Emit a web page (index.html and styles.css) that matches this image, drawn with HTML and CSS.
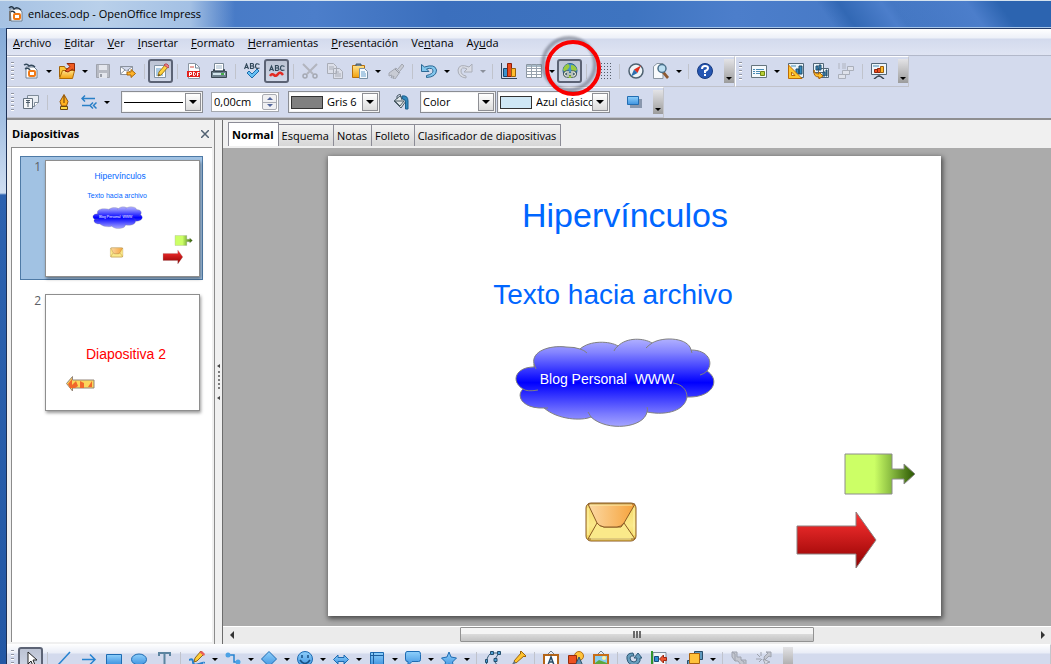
FILE: index.html
```html
<!DOCTYPE html>
<html lang="es">
<head>
<meta charset="utf-8">
<title>enlaces.odp - OpenOffice Impress</title>
<link rel="stylesheet" href="styles.css">
</head>
<body>
<svg class="defs" width="0" height="0" aria-hidden="true">
  <defs>
    <linearGradient id="blue" x1="0" y1="0" x2="0" y2="1"><stop offset="0" stop-color="#8fd0fb"/><stop offset="1" stop-color="#3f93e0"/></linearGradient>
    <linearGradient id="gold" x1="0" y1="0" x2="0" y2="1"><stop offset="0" stop-color="#ffe28a"/><stop offset="1" stop-color="#f2a10c"/></linearGradient>
    <linearGradient id="cloudFill" x1="0" y1="0" x2="0" y2="1"><stop offset="0" stop-color="#b0b0ff"/><stop offset=".15" stop-color="#8585ff"/><stop offset=".5" stop-color="#0000ff"/><stop offset=".85" stop-color="#7878ff"/><stop offset="1" stop-color="#a5a5ff"/></linearGradient>
    <linearGradient id="redFill" x1="0" y1="0" x2="0" y2="1"><stop offset="0" stop-color="#ff3434"/><stop offset="1" stop-color="#900000"/></linearGradient>
    <linearGradient id="greenFill"><stop offset="0" stop-color="#ccff66"/><stop offset=".42" stop-color="#ccff66"/><stop offset=".68" stop-color="#84b63e"/><stop offset="1" stop-color="#295400"/></linearGradient>
    <linearGradient id="flap"><stop offset="0" stop-color="#fbd9a4"/><stop offset="1" stop-color="#f6a23a"/></linearGradient>
    <linearGradient id="mail" x1="0" y1="0" x2="0" y2="1"><stop offset="0" stop-color="#f3d766"/><stop offset=".6" stop-color="#fbe98a"/><stop offset="1" stop-color="#f1d250"/></linearGradient>
    <g id="shapes">
      <g stroke="#808080" fill="url(#cloudFill)">
        <path d="M206 208C203 195 222 189 238 191Q247 191 252 193C262 184 282 185 290 190C299 181 316 182 324 187C336 180 361 182 363 194C380 194 386 206 379 215C393 224 385 242 359 241C357 254 340 260 319 256C316 272 279 276 263 261C254 265 230 264 216 252C196 253 187 241 195 233C182 225 188 211 206 211Z"/>
        <path fill="none" d="M252 193Q256 194 259 197M290 190Q287 192 286 195M324 187Q321 189 318 192M363 194L364 197M379 215Q376 218 372 219M206 208L208 213M195 233Q199 236 210 234M216 252L220 252M263 261L260 256M319 256Q320 253 319 251M359 241C359 233 353 228 345 227"/>
      </g>
      <g stroke="#8b5a24" stroke-linejoin="round">
        <rect x="258" y="347" width="50" height="38" rx="5" fill="url(#mail)"/>
        <path fill="#fae98a" d="M260 383L269 367Q273 371 276 371H293L296 367L307 383Z"/>
        <path fill="url(#flap)" d="M260 348H307L296 367Q293 371 289 371H276Q271 370 269 367Z"/>
        <path fill="none" stroke="#fff4a7" d="M262 349H304M260 352V379M306 352V379M263 383H303"/>
      </g>
      <path fill="url(#greenFill)" stroke="#8c8c8c" d="M517 298H564V313H576V308L587 318L576 328V323H564V338H517Z"/>
      <path fill="url(#redFill)" stroke="#8c8080" d="M469 370H528V356L548 384L528 412V398H469Z"/>
    </g>
  </defs>
</svg>

<header class="titlebar">
  <svg class="icon" viewBox="0 0 16 16"><path d="M2 3h10l2 3v9H3z" fill="#fff" stroke="#6d7c8d"/><path d="M1 2q3-3 5 1q3-3 7 1M2 6q3-2 5 1" fill="none" stroke="#263747" stroke-width="1.500"/><rect x="6" y="8" width="6" height="5" rx="1" fill="#fff" stroke="#f07814" stroke-width="2"/><path d="M2 5v10" stroke="#777" stroke-width="2"/></svg>
  <h1 class="window-title">enlaces.odp - OpenOffice Impress</h1>
</header>

<div class="window">
<nav class="menubar" aria-label="Menú">
  <button><u>A</u>rchivo</button><button><u>E</u>ditar</button><button><u>V</u>er</button><button><u>I</u>nsertar</button><button><u>F</u>ormato</button><button><u>H</u>erramientas</button><button><u>P</u>resentación</button><button>Ve<u>n</u>tana</button><button>Ay<u>u</u>da</button>
</nav>

<div class="bars">
<div class="toolbar" role="toolbar" aria-label="Estándar">
  <span class="grip"></span>
  <button class="tool" aria-label="Nuevo"><svg class="icon" viewBox="0 0 16 16"><path d="M3 4h8l3 3v8H3z" fill="#fff" stroke="#708193"/><path d="M1 2q3-2 5 1q3-2 6 1M2 6q3-2 5 1" fill="none" stroke="#33485b" stroke-width="1.500"/><rect x="6" y="8" width="6" height="5" rx="1" fill="#fff" stroke="#f07814" stroke-width="2"/></svg></button>
  <button class="drop" aria-label="Más opciones"></button>
  <button class="tool" aria-label="Abrir"><svg class="icon" viewBox="0 0 16 16"><path d="M.5 14V3.500h5l1 2h7v2" fill="#fbc83c" stroke="#a26208"/><path d="M.5 15.500l3-8h12l-2 8z" fill="url(#gold)" stroke="#b06b05"/><path d="M6 8l5-4.500L8 .5h7.500V8l-2-2L9 9z" fill="#ef5b21" stroke="#8f2808"/></svg></button>
  <button class="drop" aria-label="Más opciones"></button>
  <button class="tool" aria-label="Guardar" disabled><svg class="icon" viewBox="0 0 16 16"><path d="M1.500 1.500h13v13h-13z" fill="#b7bac3" stroke="#9fa3ad"/><path d="M4 2h8v5H4zM4 10h8v5H4z" fill="#e4e6ed"/><path d="M5 11h2v3H5z" fill="#999da7"/></svg></button>
  <button class="tool" aria-label="Enviar por correo"><svg class="icon" viewBox="0 0 16 16"><path d="M.5 3.500h12v8H.5zL6.500 8l6-4.500M.5 11L5 7M12 11L8 7" fill="#fff" stroke="#8b929e"/><path d="M7 9h4V6.500L15.500 10.500L11 14.500V12H7z" fill="#ffb329" stroke="#ab6607"/></svg></button>
  <span class="sep"></span>
  <button class="tool pressed" aria-label="Editar archivo"><svg class="icon" viewBox="0 0 16 16"><path d="M1.500 2.500h11v12h-11z" fill="#f7fafd" stroke="#8293a4"/><path d="M3 6h5M3 8h4M3 10h3M3 12h7" stroke="#5d9ac8"/><path d="M5 13l1-4l6-7l3 2l-7 8z" fill="#ffd33e" stroke="#9f7817"/><path d="M11 2l1-1h2l2 2v1l-1 1z" fill="#ef7e88" stroke="#b44e59"/><path d="M5 13l1-2l1 1z" fill="#222"/></svg></button>
  <span class="sep"></span>
  <button class="tool" aria-label="Exportar como PDF"><svg class="icon" viewBox="0 0 16 16"><path d="M2.500.5h7l4 4v11h-11z" fill="#fff" stroke="#8c97a3"/><path d="M9.500 1v4h4" stroke="#718798" fill="none"/><path d="M4 4h4" stroke="#d34b3e"/><path d="M1 8h13v6H1z" fill="#e3201b"/><path d="M3.500 13V9.500h2v2h-2M7.500 9v3.500h1l1-1v-1l-1-1zM11.500 13V9.500h2M11.500 11.500h1" stroke="#fff" fill="none"/></svg></button>
  <button class="tool" aria-label="Imprimir"><svg class="icon" viewBox="0 0 16 16"><path d="M3.500.5h9v7h-9z" fill="#fff" stroke="#7b8a98"/><path d="M5 3h6M5 5h6" stroke="#9eb6ca"/><path d="M.5 8.500h2v-2h1v2h9v-2h1v2h2v6H.5z" fill="#718491" stroke="#394753"/><path d="M2 10h12v2H2z" fill="#d1e4ec"/><path d="M10 11h3" stroke="#45af4a" stroke-width="2"/></svg></button>
  <span class="sep"></span>
  <button class="tool" aria-label="Ortografía y gramática"><svg class="icon" viewBox="0 0 16 16"><path d="M.5 6L2.500 1L4.500 6M1 4.500h3M6.500 5.500V.5h2q2 1 0 2.500q3 1 0 2.500zM7 3h2M15.500 1.500q-4-2-4 1.500t4 2" fill="none" stroke="#32485a" stroke-width="1.200"/><path d="M3 10l2-2l3 3l5-5l2 2l-7 7z" fill="#65c0f4" stroke="#1e6cab"/></svg></button>
  <button class="tool pressed" aria-label="Revisión automática"><svg class="icon" viewBox="0 0 16 16"><path d="M.5 8L2.500 3L4.500 8M1 6.500h3M6.500 7.500V2.500h2q2 1 0 2.500q3 1 0 2.500zM7 5h2M15.500 3.500q-4-2-4 1.500t4 2" fill="none" stroke="#32485a" stroke-width="1.200"/><path d="M1 13q2-3 4-1t4-1t5 1" fill="none" stroke="#e22b23" stroke-width="2.500"/></svg></button>
  <span class="sep"></span>
  <button class="tool" aria-label="Cortar" disabled><svg class="icon" viewBox="0 0 16 16"><path d="M1 1l10 10M15 1L5 11" stroke="#b2b5be" stroke-width="2"/><circle cx="3" cy="13" r="2" fill="none" stroke="#a5a9b3" stroke-width="1.500"/><circle cx="13" cy="13" r="2" fill="none" stroke="#a5a9b3" stroke-width="1.500"/></svg></button>
  <button class="tool" aria-label="Copiar" disabled><svg class="icon" viewBox="0 0 16 16"><path d="M.5.5h6l3 3v7h-9zM6.500 5.500h6l3 3v7h-9z" fill="#dcdfe9" stroke="#a9adb7"/><path d="M2 4h5M2 6h4M8 9h4M8 11h6M8 13h6" stroke="#a9adb7"/></svg></button>
  <button class="tool" aria-label="Pegar"><svg class="icon" viewBox="0 0 16 16"><path d="M.5 2.500h12v12H.5z" fill="url(#gold)" stroke="#b66f0c"/><path d="M4 3V1h5v2" fill="#718594" stroke="#485b69"/><path d="M7.500 5.500h5l3 3v7h-8z" fill="#f6fafe" stroke="#7890a5"/><path d="M9 9h4M9 11h5M9 13h5" stroke="#679fcc"/></svg></button>
  <button class="drop" aria-label="Más opciones"></button>
  <button class="tool" aria-label="Pincel de formato" disabled><svg class="icon" viewBox="0 0 16 16"><path d="M10 6l4-5l2 2l-4 5M1 10l7-5l4 4l-5 7H5l1-3l-3 2l1-3l-3 1z" fill="#c8cbd4" stroke="#a3a7b1"/><path d="M7 6l4 4" stroke="#8f949f"/></svg></button>
  <span class="sep"></span>
  <button class="tool" aria-label="Deshacer"><svg class="icon" viewBox="0 0 16 16"><path d="M.5 1.500v7h7.500L5.500 6Q12 4 12 8Q12 11 5.500 12.500v2Q15.500 14 15.500 7Q14 .5 3.500 4z" fill="#82c6ed" stroke="#2c6894"/></svg></button>
  <button class="drop" aria-label="Más opciones"></button>
  <button class="tool" aria-label="Restaurar" disabled><svg class="icon" viewBox="0 0 16 16"><path d="M15 1v8H7l3-3Q4 3 4 8q0 4 5 5v2Q1 14 1 7q1-7 11-3z" fill="#d9dce5" stroke="#aaaeb8"/></svg></button>
  <button class="drop off" aria-label="Más opciones" disabled></button>
  <span class="sep"></span>
  <button class="tool" aria-label="Gráfico"><svg class="icon" viewBox="0 0 16 16"><path d="M.5 0v15.500H16" fill="none" stroke="#314358"/><path d="M2.500 5.500h4v8h-4z" fill="#3c91cb" stroke="#124670"/><path d="M6.500 .5h4v13h-4z" fill="#ea4c1e" stroke="#8e1e08"/><path d="M10.500 5.500h4v8h-4z" fill="#ffbd2e" stroke="#99610a"/></svg></button>
  <button class="tool" aria-label="Tabla"><svg class="icon" viewBox="0 0 16 16"><path d="M.5 1.500h15v13H.5z" fill="#fff" stroke="#8b96a2"/><path d="M1 2h14v2H1z" fill="#a7bac7"/><path d="M.5 5.500h15M.5 8.500h15M.5 11.500h15M5.500 1v13M10.500 1v13" stroke="#98a2ad"/></svg></button>
  <button class="drop" aria-label="Más opciones"></button>
  <span class="callout">
    <button class="tool pressed" aria-label="Hiperenlace"><svg class="icon" viewBox="0 0 16 16"><circle cx="8" cy="7.500" r="7" fill="#4895c6" stroke="#27638b"/><path d="M1 7Q2 2 6 1q3 2 0 5l-3 3zM9 2q5 0 6 5l-4 2l-2-3zM4 12h8l-2 3H6z" fill="#9ccb3f"/><path d="M7 9H4q-3 2 0 4h3M9 9h3q3 2 0 4H9M5 11h6" fill="none" stroke="#3f4d52" stroke-width="3"/><path d="M7 9H4q-3 2 0 4h3M9 9h3q3 2 0 4H9M5 11h6" fill="none" stroke="#e1e8dc" stroke-width="1.300"/></svg></button>
    <svg class="ring" viewBox="0 0 64 64" aria-hidden="true"><circle class="ring-shadow" cx="30" cy="30" r="26"/><circle cx="34" cy="34" r="26" fill="none" stroke="#fa0000" stroke-width="4"/></svg>
  </span>
  <span class="sep"></span>
  <button class="tool" aria-label="Mostrar cuadrícula"><svg class="icon" viewBox="0 0 16 16"><path d="M3.500 0v16M6.500 0v16M9.500 0v16M12.500 0v16M15.500 0v16" stroke="#555d6b" stroke-dasharray="1 2"/></svg></button>
  <span class="sep"></span>
  <button class="tool" aria-label="Navegador"><svg class="icon" viewBox="0 0 16 16"><circle cx="8" cy="8" r="7" fill="#eef4f7" stroke="#4e6170" stroke-width="1.500"/><path d="M13 2.500L9.500 10L6 6.500z" fill="#e32c1b"/><path d="M3 13.500L6 6.500L9.500 10z" fill="#2d6fae"/></svg></button>
  <button class="tool" aria-label="Zoom"><svg class="icon" viewBox="0 0 16 16"><path d="M.5 3.500L4 .5h6v15H.5z" fill="#f8fafc" stroke="#8995a1"/><path d="M11 8l5 6l-2 2l-5-6z" fill="#8e5930"/><circle cx="9" cy="5.500" r="4" fill="#bcdff2" stroke="#4a6f89" stroke-width="1.500"/></svg></button>
  <button class="drop" aria-label="Más opciones"></button>
  <span class="sep"></span>
  <button class="tool" aria-label="Ayuda"><svg class="icon" viewBox="0 0 16 16"><circle cx="8" cy="8" r="7.500" fill="#2556b2" stroke="#173b81"/><path d="M5 6q0-3 3-3t3 2q0 2-3 3v2M8 11v2" fill="none" stroke="#fff" stroke-width="2"/></svg></button>
  <button class="more" aria-label="Más botones"></button>
</div>
<div class="toolbar" role="toolbar" aria-label="Presentación">
  <span class="grip"></span>
  <button class="tool" aria-label="Diapositiva"><svg class="icon" viewBox="0 0 16 16"><path d="M.5 2.500h15v12H.5z" fill="#f4f9fc" stroke="#65747d"/><path d="M2 6.500h2M2 8.500h2M2 10.500h2M5 6.500h8M5 8.500h4M5 10.500h4" stroke="#498bb5"/><path d="M9.500 8.500h4v4h-4z" fill="#b6cd35" stroke="#718611"/></svg></button>
  <button class="drop" aria-label="Más opciones"></button>
  <span class="gap"></span>
  <button class="tool" aria-label="Estilo de diapositiva"><svg class="icon" viewBox="0 0 16 16"><path d="M.5.5h15v14H.5z" fill="#eaf4fa" stroke="#536777"/><path d="M3 3h5" stroke="#498bb5"/><path d="M8 6h3v5H8zM11 3h3v8h-3z" fill="#328bc1" stroke="#214a67"/><path d="M.5 2v13.500H14z" fill="#ffc62d" stroke="#bd6c06"/><path d="M3.500 9l3.500 3.500H3.500z" fill="#f5f1d8" stroke="#bd6c06"/></svg></button>
  <button class="tool" aria-label="Duplicar diapositiva"><svg class="icon" viewBox="0 0 16 16"><path d="M.5.5h10v9H.5zM5.500 5.500h10v9h-10z" fill="#eaf4fa" stroke="#536777"/><path d="M3 3h2v4H3zM6 2h2v5H6zM10 9h2v4h-2zM13 7h1v6h-1z" fill="#3f98cf" stroke="#214a67"/><path d="M1 7q0 4 5 4V9l4 4l-4 3v-2q-6 0-5-7z" fill="#ffc02c" stroke="#ae6307"/></svg></button>
  <button class="tool" aria-label="Expandir diapositiva" disabled><svg class="icon" viewBox="0 0 16 16"><path d="M0 1h2M0 3h2M0 5h2M4 1h4M4 3h4M4 5h4" stroke="#b0b4bf"/><path d="M9.500 3.500h6v4h-6zM4.500 7.500h7v4h-7zM.5 11.500h7v4h-7z" fill="#dfe2eb" stroke="#aaafba"/></svg></button>
  <span class="sep"></span>
  <button class="tool" aria-label="Presentación en pantalla"><svg class="icon" viewBox="0 0 16 16"><path d="M.5.5h15v11H.5z" fill="#edf5fa" stroke="#536777"/><path d="M2 3h6" stroke="#498bb5"/><path d="M3.500 6.500h3v3h-3z" fill="#ec4f22" stroke="#8e250d"/><path d="M6.500 5.500h3v4h-3z" fill="#ec4f22" stroke="#8e250d"/><path d="M9.500 3.500h3v6h-3z" fill="#ffb92b" stroke="#9c5e0c"/><path d="M8 12v2M7 13l-4 3M9 13l4 3" stroke="#394550" stroke-width="1.500"/></svg></button>
  <button class="more" aria-label="Más botones"></button>
</div>
</div>

<div class="bars">
<div class="toolbar" role="toolbar" aria-label="Línea y relleno">
  <span class="grip"></span>
  <button class="tool" aria-label="Estilos y formato"><svg class="icon" viewBox="0 0 16 16"><path d="M4.500 1.500h11v7l-4 4h-7z" fill="#e9edf3" stroke="#7e8b99"/><path d="M15.500 8.500h-4v4" fill="#fff" stroke="#7e8b99"/><path d="M.5 4.500h9v10h-9z" fill="#f5f7fa" stroke="#65727f"/><path d="M5 6v7M3 8.500h4M3 6.500h4" stroke="#4d5d6b"/></svg></button>
  <span class="sep"></span>
  <button class="tool" aria-label="Línea"><svg class="icon" viewBox="0 0 16 16"><path d="M8 .5l4 7L10.500 12h-5L4 7.500z" fill="#ffb21f" stroke="#96550a"/><path d="M8 2v7" stroke="#65380b"/><path d="M4.500 12.500h7v3h-7z" fill="#ffda47" stroke="#684810"/></svg></button>
  <button class="tool" aria-label="Estilo de flecha"><svg class="icon" viewBox="0 0 16 16"><path d="M4 1.500L1 4.500l3 3M1 4.500h13M1 11.500h8M12 8.500l-3 3l3 3M15.500 8.500l-3 3l3 3" fill="none" stroke="#287fc7" stroke-width="1.500"/></svg></button>
  <button class="drop" aria-label="Más opciones"></button>
  <div class="combo line-style"><span class="line-sample"></span><select aria-label="Estilo de línea"><option></option></select><span class="combo-arrow"></span></div>
  <div class="spin"><input type="text" value="0,00cm" aria-label="Ancho de línea"><span class="steps"><button class="up" aria-label="Aumentar"></button><button class="down" aria-label="Reducir"></button></span></div>
  <div class="combo line-color"><span class="swatch gray"></span><select aria-label="Color de línea"><option>Gris 6</option></select><span class="combo-arrow"></span></div>
  <button class="tool" aria-label="Relleno"><svg class="icon" viewBox="0 0 16 16"><path d="M1 7l6-5l6 5l-5 7z" fill="#dfe5e8" stroke="#4c5d67"/><path d="M2 7h9l-4 5zM4 5V2l3-2l2 6" fill="none" stroke="#4c5d67"/><path d="M9 2q6-1 6 5v8h-2.500V8q0-3-3-3z" fill="#3188bd" stroke="#1b608d"/></svg></button>
  <div class="combo fill-type"><select aria-label="Tipo de relleno"><option>Color</option></select><span class="combo-arrow"></span></div>
  <div class="combo fill-color"><span class="swatch pale"></span><select aria-label="Color de relleno"><option>Azul clásico</option></select><span class="combo-arrow"></span></div>
  <button class="tool" aria-label="Sombra"><svg class="icon" viewBox="0 0 16 16"><path d="M4 5h12v9H4z" fill="#8997ad"/><path d="M1.500 2.500h11v8h-11z" fill="url(#blue)" stroke="#226db2"/></svg></button>
  <button class="more" aria-label="Más botones"></button>
</div>
</div>

<main class="work">
  <aside class="panel">
    <div class="panel-head"><h2>Diapositivas</h2><button class="close" aria-label="Cerrar"><svg viewBox="0 0 8 8"><path d="M0 0l8 8M8 0L0 8" stroke="#526272" stroke-width="1.500"/></svg></button></div>
    <ol class="slides">
      <li class="item selected"><span class="num">1</span>
        <svg class="thumb" viewBox="0 0 613 460"><use href="#shapes"/><g class="slide-text" text-anchor="middle"><text class="t-title" x="297" y="71">Hipervínculos</text><text class="t-sub" x="285" y="148">Texto hacia archivo</text><text class="t-cloud" x="279" y="228" xml:space="preserve">Blog Personal  WWW</text></g></svg></li>
      <li class="item"><span class="num">2</span>
        <svg class="thumb" viewBox="0 0 153 115"><text class="t-second" x="80" y="64" text-anchor="middle">Diapositiva 2</text><path d="M20.500 88.500l6-7v3.500h21.500v8H26.500v3z" fill="#fcd65b" stroke="#93857a"/><path d="M22 89l4-5v6l4-4l2 5l-3 2h-5zM34 86l4 2v5h-4zM42 92l4-6v6z" fill="#f1682b"/></svg></li>
    </ol>
  </aside>
  <div class="splitter"><svg viewBox="0 0 4 36"><path d="M3 0v4L0 2zM3 32v4l-3-2z" fill="#444"/><path d="M1 8h2M1 12h2M1 16h2M1 20h2M1 24h2" stroke="#555" stroke-width="1.500"/></svg></div>
  <section class="editor">
    <div class="tabs" role="tablist"><button class="tab active" role="tab" aria-selected="true">Normal</button><button class="tab" role="tab">Esquema</button><button class="tab" role="tab">Notas</button><button class="tab" role="tab">Folleto</button><button class="tab" role="tab">Clasificador de diapositivas</button></div>
    <div class="desk">
      <svg class="slide" viewBox="0 0 613 460"><use href="#shapes"/><g class="slide-text" text-anchor="middle"><text class="t-title" x="297" y="71">Hipervínculos</text><text class="t-sub" x="285" y="148">Texto hacia archivo</text><text class="t-cloud" x="279" y="228" xml:space="preserve">Blog Personal  WWW</text></g></svg>
    </div>
    <div class="scroll"><button class="arrow-left" aria-label="Izquierda"></button><div class="track"><div class="thumb-bar"><i></i><i></i><i></i></div></div><button class="arrow-right" aria-label="Derecha"></button></div>
  </section>
</main>

<footer class="drawing">
<div class="toolbar" role="toolbar" aria-label="Dibujo">
  <span class="grip"></span>
  <button class="tool pressed" aria-label="Seleccionar"><svg class="icon" viewBox="0 0 16 16"><path d="M5 1v12l3-3l2 5l2-1l-2-5h4z" fill="#fff" stroke="#222"/></svg></button>
  <span class="sep"></span>
  <button class="tool" aria-label="Línea"><svg class="icon" viewBox="0 0 16 16"><path d="M2 14L14 1" stroke="#2682d0" stroke-width="1.500"/></svg></button>
  <button class="tool" aria-label="Flecha"><svg class="icon" viewBox="0 0 16 16"><path d="M1 8.500h13M9 3.500l5 5l-5 5" fill="none" stroke="#2682d0" stroke-width="1.500"/></svg></button>
  <button class="tool" aria-label="Rectángulo"><svg class="icon" viewBox="0 0 16 16"><path d="M.5 3.500h15v10H.5z" fill="url(#blue)" stroke="#1d6bb2"/></svg></button>
  <button class="tool" aria-label="Elipse"><svg class="icon" viewBox="0 0 16 16"><ellipse cx="8" cy="8.500" rx="7.500" ry="5.500" fill="url(#blue)" stroke="#1d6bb2"/></svg></button>
  <button class="tool" aria-label="Texto"><svg class="icon" viewBox="0 0 16 16"><path d="M3 5V2h11v3M8.500 2v12M6 14h5" fill="none" stroke="#5c84a0" stroke-width="2"/></svg></button>
  <span class="sep"></span>
  <button class="tool" aria-label="Curva"><svg class="icon" viewBox="0 0 16 16"><path d="M0 9q4-2 4 2t6 2t5-1" fill="none" stroke="#2682d0" stroke-width="2"/><path d="M5 11l1-4l6-7l3 3l-7 7z" fill="#ffcd35" stroke="#8a641e"/><path d="M10 1l3-1l3 3l-1 2z" fill="#e85e5d"/></svg></button><button class="drop" aria-label="Más opciones"></button>
  <button class="tool" aria-label="Conector"><svg class="icon" viewBox="0 0 16 16"><path d="M3 4h6v7h5" fill="none" stroke="#2682d0" stroke-width="1.500"/><circle cx="3" cy="4" r="2.500" fill="#4ca2e5"/><circle cx="13" cy="11" r="2.500" fill="#4ca2e5"/></svg></button><button class="drop" aria-label="Más opciones"></button>
  <button class="tool" aria-label="Formas básicas"><svg class="icon" viewBox="0 0 16 16"><path d="M8 .5L15.500 8L8 15.500L.5 8z" fill="url(#blue)" stroke="#1d6bb2"/></svg></button><button class="drop" aria-label="Más opciones"></button>
  <button class="tool" aria-label="Formas de símbolos"><svg class="icon" viewBox="0 0 16 16"><circle cx="8" cy="8" r="7.500" fill="url(#blue)" stroke="#1d6bb2"/><path d="M5 4v3M11 4v3M3 9q5 7 10 0" fill="none" stroke="#174f82" stroke-width="1.500"/></svg></button><button class="drop" aria-label="Más opciones"></button>
  <button class="tool" aria-label="Flechas de bloque"><svg class="icon" viewBox="0 0 16 16"><path d="M.5 8.500L5 4v2.500h6V4l4.500 4.500L11 13v-2.500H5V13z" fill="url(#blue)" stroke="#1d6bb2"/></svg></button><button class="drop" aria-label="Más opciones"></button>
  <button class="tool" aria-label="Diagramas de flujo"><svg class="icon" viewBox="0 0 16 16"><path d="M1.500 1.500h13v13h-13z" fill="url(#blue)" stroke="#1d6bb2"/><path d="M4.500 1v13M1 4.500h13" stroke="#1d5d9d"/></svg></button><button class="drop" aria-label="Más opciones"></button>
  <button class="tool" aria-label="Llamadas"><svg class="icon" viewBox="0 0 16 16"><path d="M2 .5h12q1.500 0 1.500 3v5q0 2-2 2H7l-4 4v-4Q.5 11 .5 8V3Q.5.5 2 .5z" fill="url(#blue)" stroke="#1d6bb2"/></svg></button><button class="drop" aria-label="Más opciones"></button>
  <button class="tool" aria-label="Estrellas"><svg class="icon" viewBox="0 0 16 16"><path d="M8 1l2 5l5.500 1l-4 4l1 5L8 13l-4.500 3l1-5l-4-4L6 6z" fill="url(#blue)" stroke="#1d6bb2"/></svg></button><button class="drop" aria-label="Más opciones"></button>
  <span class="sep"></span>
  <button class="tool" aria-label="Puntos"><svg class="icon" viewBox="0 0 16 16"><path d="M6 2h8L10 8q-1 6 5 6M6 2Q1 6 1.500 14" fill="none" stroke="#355c79"/><path d="M5.500.5h3v3h-3zM12.500.5h3v3h-3zM.5 8.500h2v3h-2zM9 7.500h3v3H9z" fill="#4fa0d5" stroke="#254e6d"/></svg></button>
  <button class="tool" aria-label="Puntos de adhesión"><svg class="icon" viewBox="0 0 16 16"><path d="M4 10l7-8l-1-1l1-1l5 5l-1 1l-1-1l-8 7z" fill="#ffc42f" stroke="#9d640d"/><path d="M1 15l3-5l2 2z" fill="#647888"/></svg></button>
  <span class="sep"></span>
  <button class="tool" aria-label="Fontwork"><svg class="icon" viewBox="0 0 16 16"><path d="M4 4l4-4l4 4" fill="none" stroke="#6e7f8a"/><path d="M1 4h14v12H1z" fill="#fff" stroke="#b36519" stroke-width="2"/><path d="M5 14l3-8l3 8M6 11h4" fill="none" stroke="#274c68" stroke-width="1.500"/></svg></button>
  <button class="tool" aria-label="Galería"><svg class="icon" viewBox="0 0 16 16"><circle cx="11" cy="5" r="4.500" fill="#ffc43b" stroke="#b46d11"/><path d="M.5 4.500h8v8h-8z" fill="#ed5120" stroke="#972b0b"/><path d="M11 6l4 9H7z" fill="#628dad" stroke="#2f526b"/></svg></button>
  <button class="tool" aria-label="Imagen"><svg class="icon" viewBox="0 0 16 16"><path d="M4 4l4-4l4 4" fill="none" stroke="#6e7f8a"/><path d="M1 4h14v12H1z" fill="#8bcdef" stroke="#c66d18" stroke-width="2"/><path d="M2 12l4-3l8 3v3H2z" fill="#5ca83d"/><circle cx="11" cy="7" r="2" fill="#fff1a0"/></svg></button>
  <span class="sep"></span>
  <button class="tool" aria-label="Girar"><svg class="icon" viewBox="0 0 16 16"><path d="M7 2Q0 2 1 8t7 6q7-1 6-7h2l-4-5l-4 5h3q0 4-3 4q-4 0-4-4q0-3 4-2z" fill="#669dbd" stroke="#2d5875"/></svg></button>
  <button class="tool" aria-label="Alineación"><svg class="icon" viewBox="0 0 16 16"><path d="M2 1.500h13v13H2z" fill="#eff4f8" stroke="#7c8c9b"/><path d="M1 0v16" stroke="#32942b" stroke-width="2"/><path d="M3.500 5.500h4v5h-4z" fill="#318ed2" stroke="#174c7b"/><path d="M15.500 6.500h-3V4L8.500 8l4 4V9.500h3z" fill="#ed542e" stroke="#9e260f"/></svg></button><button class="drop" aria-label="Más opciones"></button>
  <button class="tool" aria-label="Posición"><svg class="icon" viewBox="0 0 16 16"><path d="M7.500.5h8v8h-8z" fill="#5f9abf" stroke="#294d69"/><path d="M.5 9.500h7v6h-7z" fill="#5f9abf" stroke="#294d69"/><path d="M2.500 2.500h10v10h-10z" fill="#ffc13b" stroke="#a8600d"/></svg></button><button class="drop" aria-label="Más opciones"></button>
  <span class="sep"></span>
  <button class="tool" aria-label="Extrusión" disabled><svg class="icon" viewBox="0 0 16 16"><path d="M1 1h5v5h4v3h5v5h-5l-3-4H4L1 6z" fill="#c4c7d0" stroke="#9ea3ae"/><path d="M1 1l3 2v7M10 9l3 2v3" fill="none" stroke="#9ea3ae"/></svg></button>
  <button class="tool" aria-label="Interacción" disabled><svg class="icon" viewBox="0 0 16 16"><path d="M8 6l4-4l-2-1h5v5l-2-1l-4 4z" fill="#c4c7d0" stroke="#9ea3ae"/><path d="M5 1v4M1 3l3 3M0 8h5M3 11l3-3M7 8l7 3l-3 1l-1 3z" stroke="#9ea3ae" fill="#d5d8e1"/></svg></button>
  <button class="more" aria-label="Más botones"></button>
</div>
</footer>
</div>
</body>
</html>
```
FILE: styles.css
```css
* { box-sizing: border-box; }

body {
  margin: 0;
  height: 100vh;
  display: flex;
  flex-direction: column;
  overflow: hidden;
  background: linear-gradient(#7ba3d4, #a5c1e3 120px, #cfdef1 193px, #2c62af 195px, #2358a5);
  color: #000;
  font: 12px/16px "Open Sans", "Noto Sans", sans-serif;
}

button, input, select { font: inherit; color: inherit; margin: 0; padding: 0; border: 0; background: none; }
h1, h2, ol { margin: 0; padding: 0; font: inherit; list-style: none; }
.defs { position: absolute; }
.icon { display: block; flex: none; width: 16px; height: 16px; }

.titlebar {
  flex: none;
  height: 28px;
  display: flex;
  align-items: center;
  gap: 4px;
  padding-left: 8px;
  border-top: 1px solid #d5e3ef;
  border-bottom: 1px solid #a7c6e9;
  background:
    linear-gradient(90deg, #a6c2e3 0, #b9d0ea 100px, #a3c0e4 190px, transparent 235px),
    linear-gradient(55deg, transparent 78%, #3268b4 80%, #4c7ecb 84%, transparent 85%, #4c7ecb 92%, #2c64b0 95%),
    linear-gradient(90deg, #3d72bd, #4c7eca 30%, #3b6fbd 42%, #3e74c0 60%, #4c7ecb 70%, #3e72bd);
}
.window-title { font-size: 11px; white-space: nowrap; }

.window {
  flex: 1;
  min-height: 0;
  margin-left: 6px;
  display: flex;
  flex-direction: column;
  border-top: 1px solid #243c68;
  border-left: 1px solid #1d3156;
  background: #d3daed;
}

.menubar {
  flex: none;
  height: 27px;
  display: flex;
  align-items: center;
  gap: 13px;
  padding: 1px 0 0 6px;
  border-bottom: 1px solid #b2b8ca;
  background: linear-gradient(#fff, #edf0f8 9px, #d3daed 10px, #dfe4f3);
  font-size: 11px;
}

.bars { flex: none; display: flex; height: 31px; }
.toolbar {
  flex: none;
  display: flex;
  align-items: center;
  height: 31px;
  padding: 2px 0 3px 4px;
  border: solid;
  border-width: 1px 1px 1px 0;
  border-color: #fff #c3c5cb #c0c2cb #fff;
}
.toolbar + .toolbar { border-left: 1px solid #fff; padding-left: 3px; }
.grip { width: 3px; height: 19px; margin-right: 4px; background: repeating-linear-gradient(#8f94a1 0 1px, #fff 1px 2px, transparent 2px 4px); }
.tool { flex: none; width: 25px; height: 24px; display: flex; align-items: center; justify-content: center; }
.tool.pressed { border: 2px solid #5c6375; border-radius: 3px; background: linear-gradient(#bcc3d3, #d1d8e8); }
.sep { flex: none; width: 8px; height: 15px; background: linear-gradient(#c0c3cc, #c0c3cc) center / 1px 100% no-repeat; }
.gap { width: 1px; }
.drop { flex: none; width: 11px; height: 24px; display: flex; align-items: center; justify-content: center; }
.drop::after, .combo-arrow::after, .more::after { content: ""; border: 3px solid transparent; border-top-color: #000; border-bottom: 0; }
.drop.off::after { border-top-color: #8b909b; }
.more { width: 10px; height: 24px; margin-left: 7px; display: flex; align-items: flex-end; justify-content: center; padding-bottom: 3px; background: linear-gradient(#e3e3e6, #9c9c9c); }

.callout { position: relative; display: flex; }
.ring { position: absolute; z-index: 2; left: -18px; top: -25px; width: 64px; height: 64px; pointer-events: none; }
.ring-shadow { fill: none; stroke: #555b6b; stroke-opacity: .5; stroke-width: 4; filter: blur(1px); }

.combo { position: relative; display: flex; align-items: center; height: 22px; border: 1px solid #8a8d94; background: #fff; box-shadow: inset 0 0 0 1px #f3f3f3; }
.combo select { flex: 1; width: 0; height: 20px; appearance: none; padding-left: 2px; outline: 0; font-size: 11px; white-space: nowrap; overflow: hidden; }
.combo-arrow { flex: none; width: 16px; height: 18px; margin-right: 1px; display: flex; align-items: center; justify-content: center; border: 1px solid #8e8f94; background: linear-gradient(#fff, #dcdcdc); pointer-events: none; }
.combo-arrow::after { border-width: 4px 4px 0; }
.line-style { width: 82px; margin-left: 9px; }
.line-sample { width: 60px; height: 1px; margin-left: 2px; background: #000; }
.line-color { width: 92px; margin: 0 8px 0 9px; }
.fill-type { width: 76px; margin-left: 7px; }
.fill-color { width: 113px; margin: 0 11px 0 1px; }
.swatch { flex: none; width: 32px; height: 13px; margin: 0 2px; border: 1px solid #333; }
.gray { background: #808080; }
.pale { background: #cfe7f5; }
.spin { display: flex; align-items: center; width: 68px; height: 20px; margin-left: 8px; border: 1px solid #a5a8ae; background: #fff; }
.spin input { width: 0; flex: 1; padding-left: 2px; font-size: 11px; }
.steps { display: grid; width: 15px; height: 16px; margin-right: 1px; border: 1px solid #a9abb2; border-radius: 2px; background: #f0f0f2; }
.steps button { display: flex; align-items: center; justify-content: center; min-height: 0; }
.steps button + button { border-top: 1px solid #a9abb2; }
.steps button::after { content: ""; border: 3px solid transparent; }
.steps .up::after { border-top: 0; border-bottom-color: #52659b; }
.steps .down::after { border-bottom: 0; border-top-color: #52659b; }

.work { flex: 1; min-height: 0; display: flex; border-top: 2px solid #8e8e90; background: #f0f0f0; }
.panel { flex: none; width: 208px; display: flex; flex-direction: column; padding: 0 2px 2px 4px; border-right: 1px solid #8b8b8b; }
.panel-head { flex: none; height: 27px; display: flex; align-items: center; justify-content: space-between; padding: 0 2px 0 1px; }
.panel h2 { font-size: 11px; font-weight: 700; }
.close { width: 10px; height: 16px; display: flex; align-items: center; justify-content: center; }
.close svg { width: 8px; height: 8px; }
.slides { flex: 1; padding: 8px 9px 8px 8px; border-top: 1px solid #8b8b8b; border-left: 1px solid #8b8b8b; background: #fff; display: flex; flex-direction: column; gap: 10px; }
.item { display: flex; align-items: flex-start; height: 124px; padding: 3px; border: 1px solid transparent; }
.item.selected { background: #a1c2e3; border-color: #4e7aa6; }
.num { flex: none; width: 21px; padding-right: 4px; text-align: right; line-height: 13px; color: #5c6066; }
.thumb { flex: none; width: 155px; height: 117px; border: 1px solid #8e8e8e; background: #fff; box-shadow: 1px 2px 3px rgba(0, 0, 0, .4); }

.splitter { flex: none; width: 7px; display: flex; align-items: center; justify-content: center; }
.splitter svg { width: 4px; height: 36px; }

.editor { flex: 1; min-width: 0; display: flex; flex-direction: column; border-left: 1px solid #6c6c6c; }
.tabs { flex: none; height: 28px; display: flex; align-items: flex-end; padding: 0 5px 2px; }
.tab { height: 22px; padding: 0 4px 0 3px; border: solid #8c8c96; border-width: 1px 1px 0 0; background: linear-gradient(#f3f3f3, #d6d6d6); font-size: 11px; white-space: nowrap; }
.tab.active { height: 24px; border-left-width: 1px; background: #fff; font-weight: 700; }
.desk { flex: 1; min-height: 0; padding: 8px 110px 0 105px; background: #ababab; overflow: hidden; }
.slide { display: block; width: 100%; background: #fff; box-shadow: 1px 2px 5px 1px rgba(0, 0, 0, .55); }
.slide-text { font-family: "Liberation Sans", Arial, sans-serif; fill: #0066ff; }
.t-title { font-size: 34px; }
.t-sub { font-size: 28px; }
.t-cloud { font-size: 14px; fill: #fff; }
.t-second { font: 14px "Liberation Sans", Arial, sans-serif; fill: #f00; }

.scroll { flex: none; height: 18px; display: flex; border-top: 1px solid #fff; background: #ebebeb; }
.scroll > button { width: 17px; padding-bottom: 2px; display: flex; align-items: center; justify-content: center; }
.scroll > button::after { content: ""; border: 4px solid transparent; }
.scroll .arrow-left::after { border-left: 0; border-right-color: #333; }
.scroll .arrow-right::after { border-right: 0; border-left-color: #333; }
.track { flex: 1; }
.thumb-bar { height: 15px; width: 44.6%; margin-left: 27.7%; display: flex; align-items: center; justify-content: center; gap: 1px; border: 1px solid #929292; border-radius: 1px; background: linear-gradient(#f5f5f5 45%, #dadada 50%, #c3c3c3); }
.thumb-bar i { width: 2px; height: 7px; background: #6c6c6c; }

.drawing { flex: none; height: 20px; overflow: hidden; background: linear-gradient(#fff, #e9edf7 9px, #d3daed 10px); }
.drawing .toolbar { border-top-color: transparent; }
```
